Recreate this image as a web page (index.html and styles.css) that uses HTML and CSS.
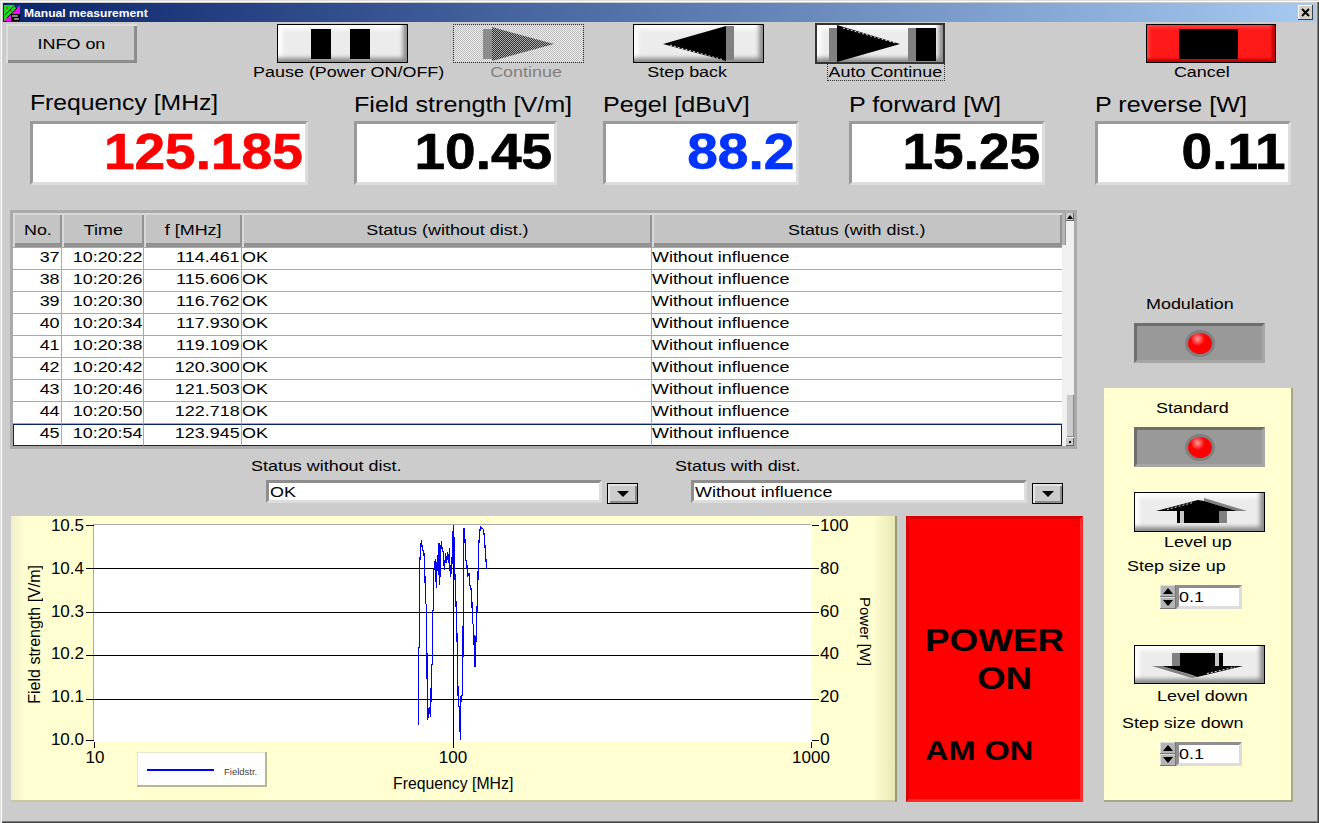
FILE: index.html
```html
<!doctype html>
<html lang="en">
<head>
	<meta charset="UTF-8">
	<title>Manual measurement</title>
	<link rel="stylesheet" href="styles.css">
</head>
<body>
<div class="window">
	<div class="titlebar">
		<svg class="app-icon" width="16" height="16">
			<rect width="16" height="16" fill="#f0f"/>
			<polygon points="0,0 16,0 0,16" fill="#1fd61f"/>
			<polygon points="10,0 16,0 12,4" fill="#1414c8"/>
			<path d="M1 10 L10 1 M3 13 L13 3" stroke="#000" fill="none"/>
			<path d="M2 3h2M6 6h2" stroke="#e01010" fill="none"/>
			<rect x="7" y="9" width="9" height="7" fill="#000"/>
			<path d="M8 11h6M10 14h5" stroke="#fff" fill="none"/>
		</svg>
		<span class="title-text">Manual measurement</span>
		<span class="close">
			<svg width="15" height="15"><path d="M4 4 L11 11 M11 4 L4 11" stroke="#000" stroke-width="2" fill="none"/></svg>
		</span>
	</div>

	<div class="toolbar">
		<div class="tool tool-info">
			<div class="btn-info"><span class="t t-c">INFO on</span></div>
		</div>
		<div class="tool tool-pause">
			<div class="btn">
				<svg class="ico" width="128" height="37"><rect x="33" y="4" width="20" height="30"/><rect x="72" y="4" width="20" height="30"/></svg>
			</div>
			<span class="t t-c tool-label lab-pause">Pause (Power ON/OFF)</span>
		</div>
		<div class="tool tool-continue">
			<div class="btn btn-off">
				<svg class="ico" width="129" height="37">
					<defs><pattern id="dith" width="2" height="2" patternUnits="userSpaceOnUse"><rect width="1" height="1" fill="#333"/><rect x="1" y="1" width="1" height="1" fill="#333"/><rect x="1" width="1" height="1" fill="#aaa"/><rect y="1" width="1" height="1" fill="#aaa"/></pattern></defs>
					<rect x="29" y="4" width="9" height="30" fill="#8c8c8c"/>
					<polygon points="38,2 100,19 38,36" fill="url(#dith)"/>
				</svg>
			</div>
			<span class="t t-c tool-label lab-continue">Continue</span>
		</div>
		<div class="tool tool-back">
			<div class="btn">
				<svg class="ico" width="129" height="37">
					<polygon points="29,19 92,1 92,36"/>
					<path d="M36 20 L90 35" stroke="#ddd" stroke-dasharray="2 2" fill="none"/>
					<rect x="92" y="1" width="8" height="34" fill="#808080"/>
				</svg>
			</div>
			<span class="t t-c tool-label lab-back">Step back</span>
		</div>
		<div class="tool tool-auto">
			<div class="btn btn-focus">
				<svg class="ico" width="126" height="37">
					<rect x="12" y="3" width="8" height="33" fill="#808080"/>
					<polygon points="20,0 83,19 20,37"/>
					<path d="M26 3 L78 18" stroke="#ddd" stroke-dasharray="2 2" fill="none"/>
					<rect x="91" y="3" width="8" height="33" fill="#808080"/>
					<rect x="99" y="3" width="20" height="33"/>
				</svg>
			</div>
			<span class="tool-label lab-auto"><span class="t t-c">Auto Continue</span></span>
		</div>
		<div class="tool tool-cancel">
			<div class="btn btn-red">
				<svg class="ico" width="127" height="37"><rect x="32" y="4" width="59" height="30"/></svg>
			</div>
			<span class="t t-c tool-label lab-cancel">Cancel</span>
		</div>
	</div>

	<div class="readouts">
		<div class="readout r-freq">
			<div class="readout-label label-high"><span class="t t-big">Frequency [MHz]</span></div>
			<div class="readout-box red"><span class="t t-r t-num">125.185</span></div>
		</div>
		<div class="readout r-field">
			<div class="readout-label"><span class="t t-big">Field strength [V/m]</span></div>
			<div class="readout-box"><span class="t t-r t-num">10.45</span></div>
		</div>
		<div class="readout r-small">
			<div class="readout-label"><span class="t t-big">Pegel [dBuV]</span></div>
			<div class="readout-box blue"><span class="t t-r t-num">88.2</span></div>
		</div>
		<div class="readout r-small r-far">
			<div class="readout-label"><span class="t t-big">P forward [W]</span></div>
			<div class="readout-box"><span class="t t-r t-num">15.25</span></div>
		</div>
		<div class="readout r-small r-far">
			<div class="readout-label"><span class="t t-big">P reverse [W]</span></div>
			<div class="readout-box"><span class="t t-r t-num">0.11</span></div>
		</div>
	</div>

	<div class="lower">
		<div class="left-col">
			<div class="table-frame">
				<table class="log">
					<thead>
						<tr><th class="c-no"><span class="t t-c">No.</span></th><th class="c-time"><span class="t t-c">Time</span></th><th class="c-f"><span class="t t-c">f [MHz]</span></th><th class="c-s1"><span class="t t-c">Status (without dist.)</span></th><th class="c-s2"><span class="t t-c">Status (with dist.)</span></th></tr>
					</thead>
					<tbody>
						<tr><td class="num"><span class="t t-r">37</span></td><td class="num"><span class="t t-r">10:20:22</span></td><td class="num"><span class="t t-r">114.461</span></td><td><span class="t">OK</span></td><td><span class="t">Without influence</span></td></tr>
						<tr><td class="num"><span class="t t-r">38</span></td><td class="num"><span class="t t-r">10:20:26</span></td><td class="num"><span class="t t-r">115.606</span></td><td><span class="t">OK</span></td><td><span class="t">Without influence</span></td></tr>
						<tr><td class="num"><span class="t t-r">39</span></td><td class="num"><span class="t t-r">10:20:30</span></td><td class="num"><span class="t t-r">116.762</span></td><td><span class="t">OK</span></td><td><span class="t">Without influence</span></td></tr>
						<tr><td class="num"><span class="t t-r">40</span></td><td class="num"><span class="t t-r">10:20:34</span></td><td class="num"><span class="t t-r">117.930</span></td><td><span class="t">OK</span></td><td><span class="t">Without influence</span></td></tr>
						<tr><td class="num"><span class="t t-r">41</span></td><td class="num"><span class="t t-r">10:20:38</span></td><td class="num"><span class="t t-r">119.109</span></td><td><span class="t">OK</span></td><td><span class="t">Without influence</span></td></tr>
						<tr><td class="num"><span class="t t-r">42</span></td><td class="num"><span class="t t-r">10:20:42</span></td><td class="num"><span class="t t-r">120.300</span></td><td><span class="t">OK</span></td><td><span class="t">Without influence</span></td></tr>
						<tr><td class="num"><span class="t t-r">43</span></td><td class="num"><span class="t t-r">10:20:46</span></td><td class="num"><span class="t t-r">121.503</span></td><td><span class="t">OK</span></td><td><span class="t">Without influence</span></td></tr>
						<tr><td class="num"><span class="t t-r">44</span></td><td class="num"><span class="t t-r">10:20:50</span></td><td class="num"><span class="t t-r">122.718</span></td><td><span class="t">OK</span></td><td><span class="t">Without influence</span></td></tr>
						<tr class="sel"><td class="num"><span class="t t-r">45</span></td><td class="num"><span class="t t-r">10:20:54</span></td><td class="num"><span class="t t-r">123.945</span></td><td><span class="t">OK</span></td><td><span class="t">Without influence</span></td></tr>
					</tbody>
				</table>
				<div class="head-end"></div>
				<div class="scroll">
					<span class="sb-btn"><svg width="8" height="8"><polygon points="4,2 1,6 7,6"/></svg></span>
					<span class="sb-thumb"></span>
					<span class="sb-btn"><svg width="8" height="8"><rect x="3" y="3" width="2" height="2"/></svg></span>
				</div>
			</div>

			<div class="combos">
				<div class="combo-group g1">
					<div class="combo-label"><span class="t">Status without dist.</span></div>
					<div class="combo-row">
						<div class="combo"><span class="t">OK</span></div>
						<div class="drop"><svg width="14" height="8"><polygon points="1,1 13,1 7,7"/></svg></div>
					</div>
				</div>
				<div class="combo-group g2">
					<div class="combo-label"><span class="t">Status with dist.</span></div>
					<div class="combo-row">
						<div class="combo"><span class="t">Without influence</span></div>
						<div class="drop"><svg width="14" height="8"><polygon points="1,1 13,1 7,7"/></svg></div>
					</div>
				</div>
			</div>

			<div class="chart-row">
				<div class="chart">
					<div class="plot">
						<svg class="plot-svg" width="718" height="217">
							<path class="grid" d="M-8 0.5H0 M-8 43.5H725 M-8 87.5H725 M-8 130.5H725 M-8 174.5H725 M-8 215.5H0 M718 215.5H725 M718 0.5H725 M0.5 217V223 M359.5 0V223 M717.5 217V223"/>
							<polyline class="trace" transform="translate(286 -15) scale(0.3333)" points="115,645 115,415 118,410 119,160 122,115 124,90 127,115 132,130 134,170 137,280 140,285 141,480 143,630 146,600 149,590 151,622 153,570 154,470 157,460 158,305 160,300 161,185 164,160 166,148 169,235 172,135 175,195 177,100 179,225 182,130 184,92 187,125 190,125 193,180 197,130 200,160 203,125 207,160 208,115 211,200 215,185 217,120 220,46 222,85 225,200 228,280 231,375 233,490 235,590 238,590 240,655 241,690 243,560 247,555 249,430 250,210 252,55 255,90 257,150 260,155 263,200 267,190 269,225 272,228 275,255 278,340 281,345 283,430 285,470 288,390 291,300 293,245 296,110 299,70 301,50 305,55 311,58 314,95 318,150 320,178"/>
						</svg>
					</div>
					<div class="yaxis yaxis-l"><span>10.5</span><span>10.4</span><span>10.3</span><span>10.2</span><span>10.1</span><span>10.0</span></div>
					<div class="yaxis yaxis-r"><span>100</span><span>80</span><span>60</span><span>40</span><span>20</span><span>0</span></div>
					<div class="xaxis"><span>10</span><span>100</span><span>1000</span></div>
					<div class="axis-title title-y">Field strength [V/m]</div>
					<div class="axis-title title-p">Power [W]</div>
					<div class="axis-title title-x">Frequency [MHz]</div>
					<div class="legend"><span class="swatch"></span><span class="legend-text">Fieldstr.</span></div>
				</div>
				<div class="power">
					<div class="pw-line"><span class="t t-pw">POWER</span></div>
					<div class="pw-line pw-on"><span class="t t-pw">ON</span></div>
					<div class="pw-line pw-am"><span class="t t-am">AM ON</span></div>
				</div>
			</div>
		</div>

		<div class="right-col">
			<div class="side-label mod-label"><span class="t">Modulation</span></div>
			<div class="led-box mod-box"><span class="led"></span></div>
			<div class="side-panel">
				<div class="side-label std-label"><span class="t">Standard</span></div>
				<div class="led-box std-box"><span class="led"></span></div>
				<div class="btn lvl lvl-up">
					<svg class="ico" width="129" height="38">
						<polygon points="69,5 112,18 102,18 69,8" fill="#808080"/>
						<polygon points="21,18 63,7 69,8 102,18"/>
						<path d="M32 16.5 L58 9.5" stroke="#ddd" stroke-dasharray="2 2" fill="none"/>
						<rect x="42" y="18" width="42" height="12"/>
						<rect x="84" y="18" width="8" height="12" fill="#808080"/>
						<rect x="45" y="18" width="4" height="12" fill="#c8c8c8"/>
					</svg>
				</div>
				<div class="side-label lab-up"><span class="t">Level up</span></div>
				<div class="side-label lab-stepup"><span class="t">Step size up</span></div>
				<div class="spin spin-up">
					<div class="spin-arrows">
						<span><svg width="12" height="8"><polygon points="6,1 1,7 11,7"/></svg></span>
						<span><svg width="12" height="8"><polygon points="1,1 11,1 6,7"/></svg></span>
					</div>
					<div class="spin-box"><span class="t">0.1</span></div>
				</div>
				<div class="btn lvl lvl-down">
					<svg class="ico" width="129" height="37">
						<polygon points="17,20 57,32 62,31 27,20" fill="#808080"/>
						<polygon points="27,20 108,20 62,31 57,29"/>
						<path d="M72 27.5 L100 21" stroke="#ddd" stroke-dasharray="2 2" fill="none"/>
						<rect x="45" y="7" width="43" height="13"/>
						<rect x="37" y="7" width="8" height="13" fill="#808080"/>
						<rect x="80" y="7" width="4" height="13" fill="#c8c8c8"/>
					</svg>
				</div>
				<div class="side-label lab-down"><span class="t">Level down</span></div>
				<div class="side-label lab-stepdown"><span class="t">Step size down</span></div>
				<div class="spin spin-down">
					<div class="spin-arrows">
						<span><svg width="12" height="8"><polygon points="6,1 1,7 11,7"/></svg></span>
						<span><svg width="12" height="8"><polygon points="1,1 11,1 6,7"/></svg></span>
					</div>
					<div class="spin-box"><span class="t">0.1</span></div>
				</div>
			</div>
		</div>
	</div>
</div>
</body>
</html>
```

FILE: styles.css
```css
*{
	box-sizing: border-box;
}
body{
	margin: 0;
	background: #ccc;
	font-family: "Liberation Sans", Arial, sans-serif;
	font-size: 14px;
	color: #000;
}
.window{
	width: 1319px;
	height: 823px;
	padding: 3px 3px 0;
	overflow: hidden;
	background: #ccc;
	box-shadow: inset 1px 1px #ddd, inset 2px 2px #fff, inset -1px -1px #404040, inset -2px -2px #808080;
}

/* the screenshot is stretched sideways, so text is too */
.t{
	display: inline-block;
	white-space: nowrap;
	transform: scaleX(1.28);
	transform-origin: left center;
}
.t-c{
	transform-origin: center;
}
.t-r{
	transform-origin: right center;
}

/* title bar */
.titlebar{
	display: flex;
	align-items: center;
	height: 19px;
	padding: 0 3px 0 1px;
	background: linear-gradient(to right, #0a246a, #a6caf0);
}
.app-icon{
	flex: none;
}
.title-text{
	margin-left: 4px;
	font-size: 11px;
	font-weight: bold;
	color: #fff;
	white-space: nowrap;
	display: inline-block;
	transform: scaleX(1.1);
	transform-origin: left center;
}
.close{
	display: block;
	width: 15px;
	height: 15px;
	margin-left: auto;
	background: #d4d0c8;
	box-shadow: inset -1px -1px #404040, inset 1px 1px #fff;
}
.close svg{
	display: block;
}

/* buttons row */
.toolbar{
	display: flex;
	align-items: flex-start;
	height: 58px;
	margin-top: 2px;
}
.tool{
	display: flex;
	flex-direction: column;
	align-items: center;
}
.tool-info{
	width: 131px;
	margin-left: 3px;
}
.tool-pause{
	width: 131px;
	margin-left: 140px;
}
.tool-continue{
	width: 131px;
	margin-left: 45px;
}
.tool-back{
	width: 131px;
	margin-left: 49px;
}
.tool-auto{
	width: 130px;
	margin-left: 51px;
}
.tool-cancel{
	width: 130px;
	margin-left: 201px;
}
.btn-info{
	display: flex;
	align-items: center;
	justify-content: center;
	width: 100%;
	height: 39px;
	background: #ccc;
	box-shadow: inset 2px 2px #ddd, inset -3px -3px 1px #8c8c8c;
}
.btn{
	width: 100%;
	height: 39px;
	flex: none;
	border: 1px solid #000;
	background: #ececec;
	box-shadow: inset -4px -4px 4px #8a8a8a, inset 4px 4px 4px #fff;
}
.btn-off{
	border: 1px dotted #333;
	background: conic-gradient(#bbb 25%, #eee 0 50%, #bbb 0 75%, #eee 0) 0 0/2px 2px;
	box-shadow: none;
}
.btn-focus{
	height: 41px;
	margin-top: -1px;
	border: 2px solid #333;
}
.btn-red{
	background: #ff1a1a;
	box-shadow: inset -3px -3px 3px #c00000, inset 3px 3px 3px #ff3c3c;
}
.ico{
	display: block;
}
.tool-label{
	margin-top: 1px;
	line-height: 16px;
	height: 16px;
}
.lab-pause{
	margin-left: 13px;
}
.lab-continue{
	margin-left: 16px;
	color: #808080;
}
.lab-back{
	margin-left: -22px;
}
.lab-auto{
	display: block;
	width: 116px;
	margin: 0 0 0 11px;
	height: 16px;
	text-align: center;
	outline: 1px dotted #333;
}
.lab-cancel{
	margin-left: -18px;
}

/* big readouts */
.readouts{
	display: flex;
	margin-top: 8px;
}
.readout-label{
	height: 31px;
	padding-top: 2px;
	font-size: 21.5px;
	line-height: 26px;
}
.label-high{
	padding-top: 0;
}
.t-big{
	transform: scaleX(1.17);
}
.label-high .t-big{
	transform: scaleX(1.15);
}
.readout-box{
	display: flex;
	align-items: center;
	justify-content: flex-end;
	height: 64px;
	padding-right: 2px;
	padding-bottom: 2px;
	background: #fff;
	border: 3px solid;
	border-color: #9a9a9a #ddd #ddd #9a9a9a;
	font-size: 50px;
	font-weight: bold;
	-webkit-text-stroke: 0.7px;
}
.t-num{
	transform: scaleX(1.1);
}
.red{
	color: #f00;
}
.blue{
	color: #0033ff;
}
.r-freq{
	width: 278px;
	margin-left: 27px;
}
.r-field{
	width: 203px;
	margin-left: 46px;
}
.r-small{
	width: 196px;
	margin-left: 46px;
}
.r-far{
	margin-left: 50px;
}

/* lower area */
.lower{
	display: flex;
	gap: 21px;
	margin: 25px 0 0 7px;
}
.left-col{
	width: 1073px;
}

/* table */
.table-frame{
	display: flex;
	width: 1067px;
	height: 239px;
	border: 3px solid #aaa;
	background: #f0f0f0;
}
.log{
	width: 1049px;
	flex: none;
	table-layout: fixed;
	border-collapse: separate;
	border-spacing: 0;
	align-self: flex-start;
}
.log th{
	height: 35px;
	padding: 1px 0 2px;
	font-weight: normal;
	background: #c4c4c4;
	border-bottom: 1px solid #aaa;
	box-shadow: inset 2px 2px #d8d8d8, inset -2px -4px #929292, inset 0 -3px #ddd;
}
.c-no{
	width: 49px;
}
.c-time{
	width: 82px;
}
.c-f{
	width: 98px;
}
.c-s1{
	width: 410px;
}
.log td{
	height: 22px;
	padding: 0 0 4px 0;
	background: #fff;
	border-right: 1px solid #aaa;
	border-bottom: 1px solid #aaa;
}
.log td:last-child{
	border-right: 0;
}
.log td.num{
	padding: 0 1px 4px 0;
	text-align: right;
}
.log .sel td{
	border-top: 1px solid #0a246a;
	border-bottom: 1px solid #0a246a;
	height: 22px;
}
.log .sel td:first-child{
	border-left: 1px solid #0a246a;
}
.log .sel td:last-child{
	border-right: 1px solid #0a246a;
}
.head-end{
	width: 4px;
	height: 32px;
	flex: none;
	background: #b4b4b4;
	box-shadow: inset -1px 0 #929292;
}
.scroll{
	display: flex;
	flex-direction: column;
	width: 8px;
	height: 233px;
}
.sb-btn{
	display: block;
	height: 8px;
	background: #ccc;
	box-shadow: inset -1px -1px #666;
}
.sb-btn svg{
	display: block;
}
.sb-thumb{
	height: 43px;
	margin: auto 0 1px;
	background: #ccc;
	box-shadow: inset 1px 1px #eee, inset -1px -1px #888;
}

/* combos */
.combos{
	display: flex;
	height: 67px;
}
.combo-group{
	padding-top: 9px;
}
.g1{
	width: 640px;
	padding-left: 241px;
}
.g2{
	padding-left: 25px;
}
.combo-label{
	height: 16px;
	line-height: 16px;
}
.combo-row{
	display: flex;
	gap: 5px;
	margin: 6px 0 0 15px;
}
.g2 .combo-row{
	margin-left: 16px;
}
.combo{
	width: 336px;
	height: 23px;
	padding-left: 1px;
	line-height: 19px;
	background: #fff;
	border: 3px solid;
	border-color: #8e8e8e #ddd #ddd #8e8e8e;
}
.drop{
	display: flex;
	align-items: center;
	justify-content: center;
	width: 31px;
	height: 21px;
	margin-top: 3px;
	background: #ccc;
	border: 1px solid #000;
	box-shadow: inset 2px 2px #e4e4e4, inset -2px -2px #8a8a8a;
}

/* chart */
.chart-row{
	display: flex;
	gap: 9px;
	margin-left: 1px;
}
.chart{
	position: relative;
	width: 886px;
	height: 286px;
	background: linear-gradient(to right, #eeeecb, #ffffd2 14px, #ffffd2 860px, #e6e6b4);
	box-shadow: inset -2px 0 #9a9a78, inset 0 -2px #c8c89c;
	font-size: 17px;
}
.plot{
	position: absolute;
	left: 83px;
	top: 9px;
	width: 718px;
	height: 217px;
	background: #fff;
	box-shadow: -1px -1px #aaa;
}
.plot-svg{
	display: block;
	overflow: visible;
}
.grid{
	stroke: #000;
	fill: none;
	shape-rendering: crispEdges;
}
.trace{
	stroke: #00f;
	stroke-width: 3.6;
	fill: none;
	shape-rendering: crispEdges;
}
.yaxis{
	position: absolute;
	top: 2px;
	display: flex;
	flex-direction: column;
	justify-content: space-between;
	height: 230px;
	line-height: 16px;
}
.yaxis-l{
	left: 20px;
	width: 53px;
	text-align: right;
}
.yaxis-r{
	left: 809px;
}
.xaxis{
	position: absolute;
	top: 234px;
	left: 64px;
	display: flex;
	justify-content: space-between;
	width: 756px;
	line-height: 16px;
}
.xaxis span{
	width: 40px;
	text-align: center;
}
.axis-title{
	position: absolute;
	white-space: nowrap;
	font-size: 16px;
}
.title-y{
	left: 15px;
	top: 49px;
	writing-mode: vertical-rl;
	transform: rotate(180deg);
}
.title-p{
	left: 846px;
	top: 81px;
	font-size: 15px;
	writing-mode: vertical-rl;
}
.title-x{
	left: 382px;
	top: 259px;
	font-size: 15.8px;
}
.legend{
	position: absolute;
	left: 126px;
	top: 236px;
	display: flex;
	align-items: center;
	gap: 10px;
	width: 130px;
	height: 35px;
	padding: 0 0 0 10px;
	background: #fff;
	box-shadow: inset -2px -2px #b8b890, inset 1px 1px #e8e8c8;
}
.swatch{
	flex: none;
	width: 67px;
	height: 2px;
	background: #00f;
}
.legend-text{
	margin-top: 4px;
	font-size: 9.5px;
	color: #444;
}

/* power block */
.power{
	width: 177px;
	height: 286px;
	padding: 102px 0 0 16px;
	background: #f00;
	border: 3px solid;
	border-color: #d80000 #ff2a2a #ff2a2a #d80000;
	font-weight: bold;
}
.pw-line{
	height: 38px;
	line-height: 38px;
}
.t-pw{
	font-size: 32px;
	transform: scaleX(1.15);
}
.t-am{
	font-size: 28px;
	transform: scaleX(1.16);
}
.pw-on{
	margin-left: 52px;
}
.pw-am{
	margin-top: 35px;
}

/* right column */
.right-col{
	width: 189px;
}
.side-label{
	height: 16px;
	line-height: 16px;
}
.mod-label{
	margin: 86px 0 0 42px;
}
.led-box{
	display: flex;
	align-items: center;
	justify-content: center;
	width: 131px;
	height: 40px;
	margin-left: 30px;
	background: #999;
	border: 3px solid;
	border-color: #6e6e6e #a6a6a6 #a6a6a6 #6e6e6e;
}
.mod-box{
	margin-top: 11px;
}
.led{
	width: 24px;
	height: 21px;
	border-radius: 50%;
	background: radial-gradient(circle at 40% 28%, #ff9a9a, #f00 35%, #f00 70%, #c00000);
	box-shadow: 0 0 0 3px #808080;
}
.side-panel{
	height: 414px;
	margin-top: 25px;
	padding-top: 12px;
	background: #ffffd2;
	box-shadow: inset -2px -2px #a8a888;
}
.std-label{
	margin-left: 52px;
}
.std-box{
	margin-top: 11px;
}
.lvl{
	width: 131px;
	margin-left: 30px;
	height: 40px;
}
.lvl-up{
	margin-top: 25px;
}
.lab-up{
	margin: 2px 0 0 60px;
}
.lab-stepup{
	margin: 8px 0 0 23px;
}
.spin{
	display: flex;
	margin: 11px 0 0 56px;
	height: 24px;
}
.spin-arrows{
	display: flex;
	flex-direction: column;
	width: 16px;
}
.spin-arrows span{
	display: flex;
	align-items: center;
	justify-content: center;
	height: 12px;
	background: #b4b4b4;
	box-shadow: inset -1px -1px #777, inset 1px 1px #ddd;
}
.spin-box{
	width: 66px;
	padding-left: 0;
	line-height: 18px;
	background: #fff;
	border: 3px solid;
	border-color: #8e8e8e #ddd #ddd #8e8e8e;
}
.lvl-down{
	margin-top: 36px;
	height: 39px;
}
.lab-down{
	margin: 4px 0 0 53px;
}
.lab-stepdown{
	margin: 11px 0 0 18px;
}
```
